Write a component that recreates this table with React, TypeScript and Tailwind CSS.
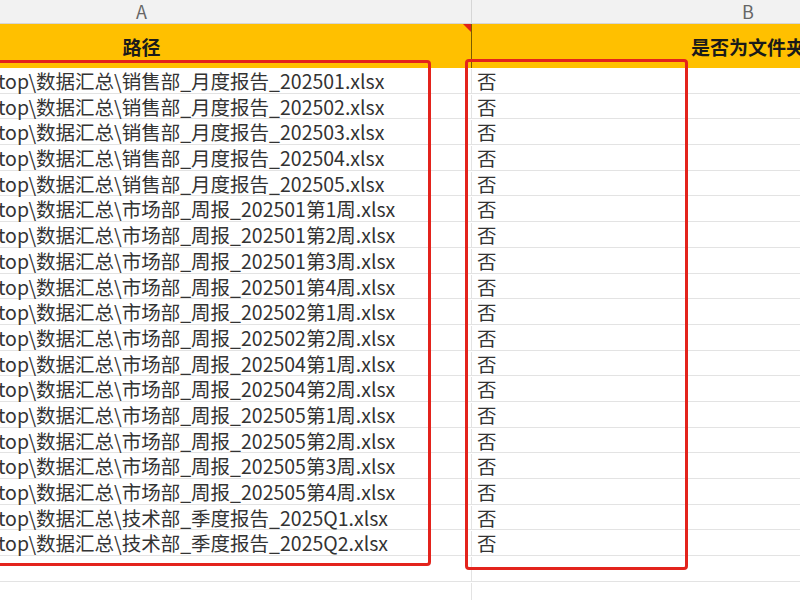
const files = [
  "销售部_月度报告_202501",
  "销售部_月度报告_202502",
  "销售部_月度报告_202503",
  "销售部_月度报告_202504",
  "销售部_月度报告_202505",
  "市场部_周报_202501第1周",
  "市场部_周报_202501第2周",
  "市场部_周报_202501第3周",
  "市场部_周报_202501第4周",
  "市场部_周报_202502第1周",
  "市场部_周报_202502第2周",
  "市场部_周报_202504第1周",
  "市场部_周报_202504第2周",
  "市场部_周报_202505第1周",
  "市场部_周报_202505第2周",
  "市场部_周报_202505第3周",
  "市场部_周报_202505第4周",
  "技术部_季度报告_2025Q1",
  "技术部_季度报告_2025Q2",
];

const rows = [...files.map((f) => "top\\数据汇总\\" + f + ".xlsx"), "", ""];

export default function App() {
  return (
    <div
      className="relative w-[800px] h-[600px] overflow-hidden bg-white text-[#333]"
      style={{ fontFamily: '"Noto Sans CJK SC", "Noto Sans", sans-serif' }}
    >
      {/* Column letters */}
      <div className="flex h-[24px] bg-[#f2f2f2] border-b border-[#d6d6d6] text-[18px] text-[#666] leading-[23px]">
        <div className="w-[660px] ml-[-188px] shrink-0 text-center border-r border-[#d6d6d6]">A</div>
        <div className="w-[552px] shrink-0 text-center">B</div>
      </div>

      {/* Header row */}
      <div className="flex h-[44px] bg-[#ffc000] text-[19px] font-bold text-[#1a1a1a] leading-[45px]">
        <div className="relative w-[660px] ml-[-188px] shrink-0 text-center border-r border-[#7a5c00]">
          路径
          <div className="absolute right-0 top-0 w-0 h-0 border-t-[8px] border-t-[#e0221b] border-l-[8px] border-l-transparent" />
        </div>
        <div className="w-[552px] shrink-0 text-center">是否为文件夹</div>
      </div>

      {/* Data rows */}
      {rows.map((r, i) => (
        <div key={i} className="flex h-[25.7px] border-b border-[#e3e3e3] text-[19.5px] leading-[24px] pt-[1px]">
          <div className="w-[660px] ml-[-188px] shrink-0 pl-[186px] border-r border-[#e3e3e3] whitespace-nowrap">
            {r}
          </div>
          <div className="w-[552px] shrink-0 pl-[5px]">{r ? "否" : ""}</div>
        </div>
      ))}

      {/* Red highlight boxes */}
      <div className="absolute left-[-10px] top-[60px] w-[441px] h-[506px] border-[3px] border-[#e3231c] rounded-[4px]" />
      <div className="absolute left-[465px] top-[59px] w-[223px] h-[511px] border-[3px] border-[#e3231c] rounded-[4px]" />
    </div>
  );
}
